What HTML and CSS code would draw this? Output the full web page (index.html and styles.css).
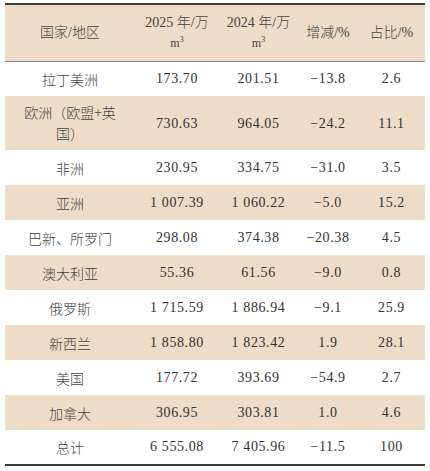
FILE: index.html
```html
<!DOCTYPE html>
<html lang="zh-CN">
<head>
<meta charset="utf-8">
<link rel="stylesheet" href="styles.css">
</head>
<body>
<table class="data">
  <colgroup>
    <col class="c1"><col class="c2"><col class="c3"><col class="c4"><col class="c5">
  </colgroup>
  <thead>
    <tr>
      <th>国家/地区</th>
      <th>2025 年/万<br><span class="unit">m<sup>3</sup></span></th>
      <th>2024 年/万<br><span class="unit">m<sup>3</sup></span></th>
      <th>增减/%</th>
      <th>占比/%</th>
    </tr>
  </thead>
  <tbody>
    <tr><td>拉丁美洲</td><td class="n">173.70</td><td class="n">201.51</td><td class="n">−13.8</td><td class="n">2.6</td></tr>
    <tr class="alt tall"><td>欧洲（欧盟+英国）</td><td class="n">730.63</td><td class="n">964.05</td><td class="n">−24.2</td><td class="n">11.1</td></tr>
    <tr><td>非洲</td><td class="n">230.95</td><td class="n">334.75</td><td class="n">−31.0</td><td class="n">3.5</td></tr>
    <tr class="alt"><td>亚洲</td><td class="n">1 007.39</td><td class="n">1 060.22</td><td class="n">−5.0</td><td class="n">15.2</td></tr>
    <tr><td>巴新、所罗门</td><td class="n">298.08</td><td class="n">374.38</td><td class="n">−20.38</td><td class="n">4.5</td></tr>
    <tr class="alt"><td>澳大利亚</td><td class="n">55.36</td><td class="n">61.56</td><td class="n">−9.0</td><td class="n">0.8</td></tr>
    <tr><td>俄罗斯</td><td class="n">1 715.59</td><td class="n">1 886.94</td><td class="n">−9.1</td><td class="n">25.9</td></tr>
    <tr class="alt"><td>新西兰</td><td class="n">1 858.80</td><td class="n">1 823.42</td><td class="n">1.9</td><td class="n">28.1</td></tr>
    <tr><td>美国</td><td class="n">177.72</td><td class="n">393.69</td><td class="n">−54.9</td><td class="n">2.7</td></tr>
    <tr class="alt"><td>加拿大</td><td class="n">306.95</td><td class="n">303.81</td><td class="n">1.0</td><td class="n">4.6</td></tr>
    <tr><td>总计</td><td class="n">6 555.08</td><td class="n">7 405.96</td><td class="n">−11.5</td><td class="n">100</td></tr>
  </tbody>
</table>
</body>
</html>
```

FILE: styles.css
```css
html, body {
  margin: 0;
  padding: 0;
  background: #ffffff;
}

body {
  padding: 3px 5px 0 5px;
  font-family: "Liberation Serif", "Noto Sans CJK SC", serif;
  font-size: 14px;
  color: #3a3a3a;
}

.data {
  width: 420px;
  border-collapse: collapse;
  table-layout: fixed;
  border-top: 2px solid #3c3c3c;
  border-bottom: 2px solid #3c3c3c;
}

.c1 { width: 130px; }
.c2 { width: 84px; }
.c3 { width: 79px; }
.c4 { width: 60px; }
.c5 { width: 67px; }

.data thead tr {
  background: #eddcc8;
}

.data th {
  height: 57px;
  padding: 0 4px;
  box-sizing: border-box;
  font-weight: 300;
  line-height: 20px;
  text-align: center;
  vertical-align: middle;
  color: #444;
  border-bottom: 1px solid #8a8582;
}

.unit {
  font-size: 12px;
}

.unit sup {
  font-size: 8px;
  vertical-align: 5px;
  line-height: 0;
}

.data td {
  height: 35px;
  padding: 0 12px;
  box-sizing: border-box;
  line-height: 20px;
  text-align: center;
  vertical-align: middle;
  font-family: "Noto Sans CJK SC", sans-serif;
  font-weight: 300;
  color: #444;
}

.data td.n {
  padding: 0 2px;
  font-family: "Liberation Serif", serif;
  font-weight: normal;
  letter-spacing: 0.6px;
  color: #333;
}

.data tr.tall td {
  height: 54px;
  line-height: 21px;
}

.data tr.alt {
  background: #eddcc8;
}
```
